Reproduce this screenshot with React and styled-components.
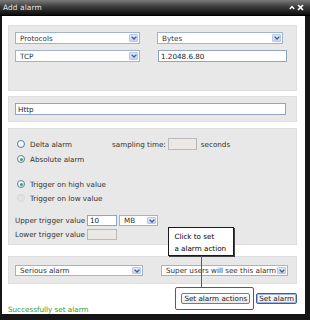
import React from "react";
import styled, { createGlobalStyle } from "styled-components";

const Global = createGlobalStyle`
  html, body { margin: 0; padding: 0; background: #fff; }
  body { font-family: "DejaVu Sans", Verdana, sans-serif; font-size: 7px; }
`;

const Window = styled.div`
  width: 310px;
  height: 320px;
  box-sizing: border-box;
  background: #161616;
  padding: 0 5px 6px 2px;
  display: flex;
  flex-direction: column;
`;

const TitleBar = styled.div`
  height: 16px;
  margin-left: -2px;
  margin-right: -5px;
  padding: 0 6px 0 3px;
  display: flex;
  align-items: center;
  justify-content: space-between;
  background: linear-gradient(#7a7a7a 0%, #3c3c3c 45%, #0c0c0c 100%);
  border-bottom: 1px solid #000;
`;

const Title = styled.span`
  color: #e8e8e8;
  font-size: 7.4px;
  letter-spacing: 0.1px;
`;

const TitleIcons = styled.div`
  display: flex;
  gap: 2px;
  align-items: center;
`;

const Body = styled.div`
  flex: 1;
  background: #fff;
  padding: 9px 8px 0 6px;
  display: flex;
  flex-direction: column;
`;

const Panel = styled.div`
  background: #e8e8e8;
  border: 1px solid #dedede;
  box-sizing: border-box;
  margin-top: ${(p) => p.$mt || 0}px;
  height: ${(p) => p.$h}px;
  padding: ${(p) => p.$pad || "6px"};
`;

const Grid = styled.div`
  display: grid;
  grid-template-columns: 125px 130px;
  column-gap: 17px;
  row-gap: 6px;
`;

const SelectBox = styled.div`
  position: relative;
  box-sizing: border-box;
  width: ${(p) => p.$w}px;
  height: ${(p) => p.$h || 12}px;
  background: #fff;
  border: 1px solid #9fb3cf;
  color: #333;
  display: flex;
  align-items: center;
  padding-left: 4px;
  font-size: 7.2px;
  white-space: nowrap;
  overflow: hidden;
`;

const ArrowBox = styled.span`
  position: absolute;
  right: 1px;
  top: 1px;
  bottom: 1px;
  width: 9px;
  background: linear-gradient(#e2eafb, #c3d3f3);
  border: 1px solid #b6c7ea;
  box-sizing: border-box;
  border-radius: 1px;
  display: flex;
  align-items: center;
  justify-content: center;
`;

const TextInput = styled.div`
  box-sizing: border-box;
  width: ${(p) => p.$w}px;
  height: ${(p) => p.$h || 12}px;
  margin-left: ${(p) => p.$ml || 0}px;
  background: ${(p) => (p.$disabled ? "#ece9e4" : "#fff")};
  border: 1px solid ${(p) => (p.$disabled ? "#b9b9b9" : "#8ea5c4")};
  color: #222;
  display: flex;
  align-items: center;
  padding-left: 2px;
  font-size: 7.2px;
`;

const Row = styled.div`
  display: flex;
  align-items: center;
  height: ${(p) => p.$h || 12}px;
  margin-top: ${(p) => p.$mt || 0}px;
  padding-left: ${(p) => p.$pl || 0}px;
  color: #333;
  font-size: 7.2px;
`;

const Radio = styled.span`
  box-sizing: border-box;
  width: 8px;
  height: 8px;
  border-radius: 50%;
  border: 1px solid ${(p) => (p.$disabled ? "#d6d6d6" : "#5b7fb3")};
  background: ${(p) => (p.$disabled ? "#e4e4e4" : "radial-gradient(circle at 40% 35%, #fff, #e4e8ee)")};
  display: flex;
  align-items: center;
  justify-content: center;
  margin-right: 5px;
  &::after {
    content: "";
    display: ${(p) => (p.$checked ? "block" : "none")};
    width: 3px;
    height: 3px;
    border-radius: 50%;
    background: #35b035;
  }
`;

const Label = styled.span`
  width: ${(p) => (p.$w ? `${p.$w}px` : "auto")};
  margin-left: ${(p) => p.$ml || 0}px;
  margin-right: ${(p) => p.$mr || 0}px;
  color: ${(p) => p.$color || "#333"};
  white-space: nowrap;
`;

const ButtonRow = styled.div`
  display: flex;
  justify-content: flex-end;
  gap: 6px;
  margin-top: 9px;
`;

const Button = styled.button`
  font-family: "DejaVu Sans", Verdana, sans-serif;
  font-size: 7.2px;
  height: 11px;
  box-sizing: border-box;
  padding: 0 2px;
  color: #222;
  background: linear-gradient(#fdfdfd, #e9e9e9);
  border: 1px solid ${(p) => (p.$focused ? "#3e5f9c" : "#7a7a7a")};
  box-shadow: ${(p) => (p.$focused ? "inset 0 0 0 1px #9fb6e0" : "none")};
  border-radius: 2px;
  display: flex;
  align-items: center;
  line-height: 1;
`;

const Highlight = styled.span`
  position: relative;
  display: inline-flex;
`;

const RedFrame = styled.span`
  position: absolute;
  left: -6px;
  right: -4px;
  top: -6px;
  bottom: -6px;
  border: 1px solid #ee1c1c;
  border-radius: 2px;
  pointer-events: none;
`;

const Callout = styled.div`
  position: absolute;
  left: -13px;
  top: -66px;
  width: 66px;
  height: 29px;
  box-sizing: border-box;
  background: #fff;
  border: 1px solid #1a1a1a;
  box-shadow: 1px 1px 0 #444;
  padding: 3px 0 0 5px;
  color: #000;
  font-size: 7.2px;
  line-height: 12px;
  white-space: nowrap;
  z-index: 2;
`;

const Leader = styled.span`
  position: absolute;
  left: 20px;
  top: -37px;
  width: 1px;
  height: 31px;
  background: #ee1c1c;
  z-index: 2;
`;

const Status = styled.div`
  margin-top: 1px;
  color: #2e9a2e;
  font-size: 7.2px;
`;

const Chevron = () => (
  <svg width="6" height="4" viewBox="0 0 6 4">
    <path d="M0.6 0.6 L3 3 L5.4 0.6" fill="none" stroke="#3f5a8c" strokeWidth="1.3" />
  </svg>
);

const Select = ({ w, h, children }) => (
  <SelectBox $w={w} $h={h}>
    {children}
    <ArrowBox>
      <Chevron />
    </ArrowBox>
  </SelectBox>
);

export default function App() {
  return (
    <>
      <Global />
      <Window>
        <TitleBar>
          <Title>Add alarm</Title>
          <TitleIcons>
            <svg width="6" height="5" viewBox="0 0 6 5">
              <path d="M0.8 4 L3 1.6 L5.2 4" fill="none" stroke="#fff" strokeWidth="1.4" />
            </svg>
            <svg width="7" height="7" viewBox="0 0 7 7">
              <path d="M1 1 L6 6 M6 1 L1 6" fill="none" stroke="#fff" strokeWidth="1.7" />
            </svg>
          </TitleIcons>
        </TitleBar>
        <Body>
          <Panel $h={66} $pad="6px 6px">
            <Grid>
              <Select w={125}>Protocols</Select>
              <Select w={126}>Bytes</Select>
              <Select w={125}>TCP</Select>
              <TextInput $w={129} $ml={1}>1.2048.6.80</TextInput>
            </Grid>
          </Panel>
          <Panel $mt={5} $h={26} $pad="6px 6px">
            <TextInput $w={271}>Http</TextInput>
          </Panel>
          <Panel $mt={6} $h={117} $pad="9px 6px 0 5px">
            <Row $pl={3}>
              <Radio />
              <Label $w={82}>Delta alarm</Label>
              <Label $mr={2}>sampling time:</Label>
              <TextInput $w={29} $disabled />
              <Label $ml={4}>seconds</Label>
            </Row>
            <Row $pl={3} $mt={3}>
              <Radio $checked />
              <Label>Absolute alarm</Label>
            </Row>
            <Row $pl={3} $mt={13}>
              <Radio $checked />
              <Label>Trigger on high value</Label>
            </Row>
            <Row $pl={3} $mt={2}>
              <Radio $disabled />
              <Label>Trigger on low value</Label>
            </Row>
            <Row $h={11} $mt={11} $pl={1}>
              <Label $w={72}>Upper trigger value</Label>
              <TextInput $w={30} $h={11}>10</TextInput>
              <Label $ml={2} />
              <Select w={39} h={11}>MB</Select>
            </Row>
            <Row $h={11} $mt={3} $pl={1}>
              <Label $w={72}>Lower trigger value</Label>
              <TextInput $w={30} $h={11} $disabled />
            </Row>
          </Panel>
          <Panel $mt={11} $h={28} $pad="8px 6px">
            <Row $h={11}>
              <Select w={128} h={11}>Serious alarm</Select>
              <Label $ml={18} />
              <Select w={127} h={11}>Super users will see this alarm</Select>
            </Row>
          </Panel>
          <ButtonRow>
            <Highlight>
              <RedFrame />
              <Callout>
                Click to set
                <br />
                a alarm action
              </Callout>
              <Leader />
              <Button>Set alarm actions</Button>
            </Highlight>
            <Button $focused>Set alarm</Button>
          </ButtonRow>
          <Status>Successfully set alarm</Status>
        </Body>
      </Window>
    </>
  );
}
